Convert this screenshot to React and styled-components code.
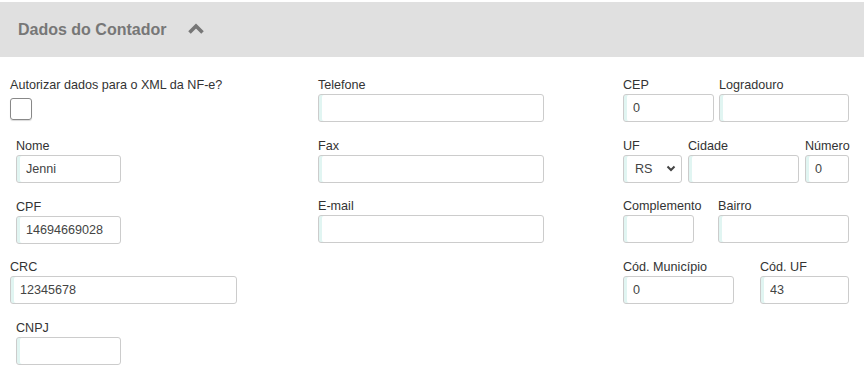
import React from 'react'
import styled, { createGlobalStyle } from 'styled-components'

const GlobalStyle = createGlobalStyle`
  body {
    margin: 0;
    background: #fff;
    font-family: 'Liberation Sans', Arial, sans-serif;
    color: #333;
  }
`

const Panel = styled.section`
  width: 864px;
  padding-top: 2px;
`

const Header = styled.div`
  display: flex;
  align-items: center;
  gap: 22px;
  height: 55px;
  padding-left: 18px;
  background: #e0e0e0;
  h2 {
    margin: 0;
    font-size: 16px;
    font-weight: bold;
    color: #777;
  }
  svg {
    margin-top: -1px;
  }
`

const Body = styled.div`
  display: grid;
  grid-template-columns: 308px 305px 227px;
  padding: 20px 0 0 10px;
`

const Column = styled.div`
  display: flex;
  flex-direction: column;
`

const Row = styled.div`
  display: flex;
  gap: ${p => p.$gap || 5}px;
  margin-bottom: 15.5px;
  padding-left: ${p => p.$indent || 0}px;
`

const Field = styled.div`
  display: flex;
  flex-direction: column;
  width: ${p => p.$w}px;
`

const Label = styled.label`
  font-size: 12.6px;
  line-height: 16px;
  color: #333;
  margin-bottom: 1px;
  white-space: nowrap;
`

const Input = styled.input`
  box-sizing: border-box;
  height: 28px;
  width: 100%;
  border: 1px solid #ccc;
  border-radius: 3px;
  box-shadow: inset 3px 0 0 #e1f5f2;
  padding: 0 8px 0 9px;
  font-family: inherit;
  font-size: 12.6px;
  color: #444;
  outline: none;
`

const SelectBox = styled.div`
  box-sizing: border-box;
  height: 28px;
  border: 1px solid #ccc;
  border-radius: 3px;
  box-shadow: inset 3px 0 0 #e1f5f2;
  display: flex;
  align-items: center;
  justify-content: space-between;
  padding: 0 5px 0 11px;
  font-size: 12.6px;
  color: #444;
`

const Check = styled.div`
  box-sizing: border-box;
  width: 22px;
  height: 22px;
  border: 1px solid #888;
  border-radius: 3px;
  box-shadow: 0 1px 1px rgba(0,0,0,0.15);
  margin: 4px 0 18px;
`

const ChevronUp = () => (
  <svg width="16" height="12" viewBox="0 0 16 12">
    <path d="M1.5 9.5 L8 3 L14.5 9.5" fill="none" stroke="#777" strokeWidth="3.6" strokeLinejoin="miter" />
  </svg>
)

const ChevronDown = () => (
  <svg width="10" height="7" viewBox="0 0 10 7">
    <path d="M1.5 1.5 L5 5 L8.5 1.5" fill="none" stroke="#444" strokeWidth="2" />
  </svg>
)

const TextField = ({ label, value = '', w }) => (
  <Field $w={w}>
    <Label>{label}</Label>
    <Input defaultValue={value} />
  </Field>
)

export default function App() {
  return (
    <>
      <GlobalStyle />
      <Panel>
        <Header>
          <h2>Dados do Contador</h2>
          <ChevronUp />
        </Header>
        <Body>
          <Column>
            <Label>Autorizar dados para o XML da NF-e?</Label>
            <Check />
            <Row $indent={6}><TextField label="Nome" value="Jenni" w={105} /></Row>
            <Row $indent={6}><TextField label="CPF" value="14694669028" w={105} /></Row>
            <Row><TextField label="CRC" value="12345678" w={227} /></Row>
            <Row $indent={6}><TextField label="CNPJ" w={105} /></Row>
          </Column>
          <Column>
            <Row><TextField label="Telefone" w={226} /></Row>
            <Row><TextField label="Fax" w={226} /></Row>
            <Row><TextField label="E-mail" w={226} /></Row>
          </Column>
          <Column>
            <Row>
              <TextField label="CEP" value="0" w={91} />
              <TextField label="Logradouro" w={130} />
            </Row>
            <Row $gap={6}>
              <Field $w={59}>
                <Label>UF</Label>
                <SelectBox>RS <ChevronDown /></SelectBox>
              </Field>
              <TextField label="Cidade" w={111} />
              <TextField label="Número" value="0" w={44} />
            </Row>
            <Row $gap={24}>
              <TextField label="Complemento" w={71} />
              <TextField label="Bairro" w={131} />
            </Row>
            <Row $gap={26}>
              <TextField label="Cód. Município" value="0" w={111} />
              <TextField label="Cód. UF" value="43" w={89} />
            </Row>
          </Column>
        </Body>
      </Panel>
    </>
  )
}
